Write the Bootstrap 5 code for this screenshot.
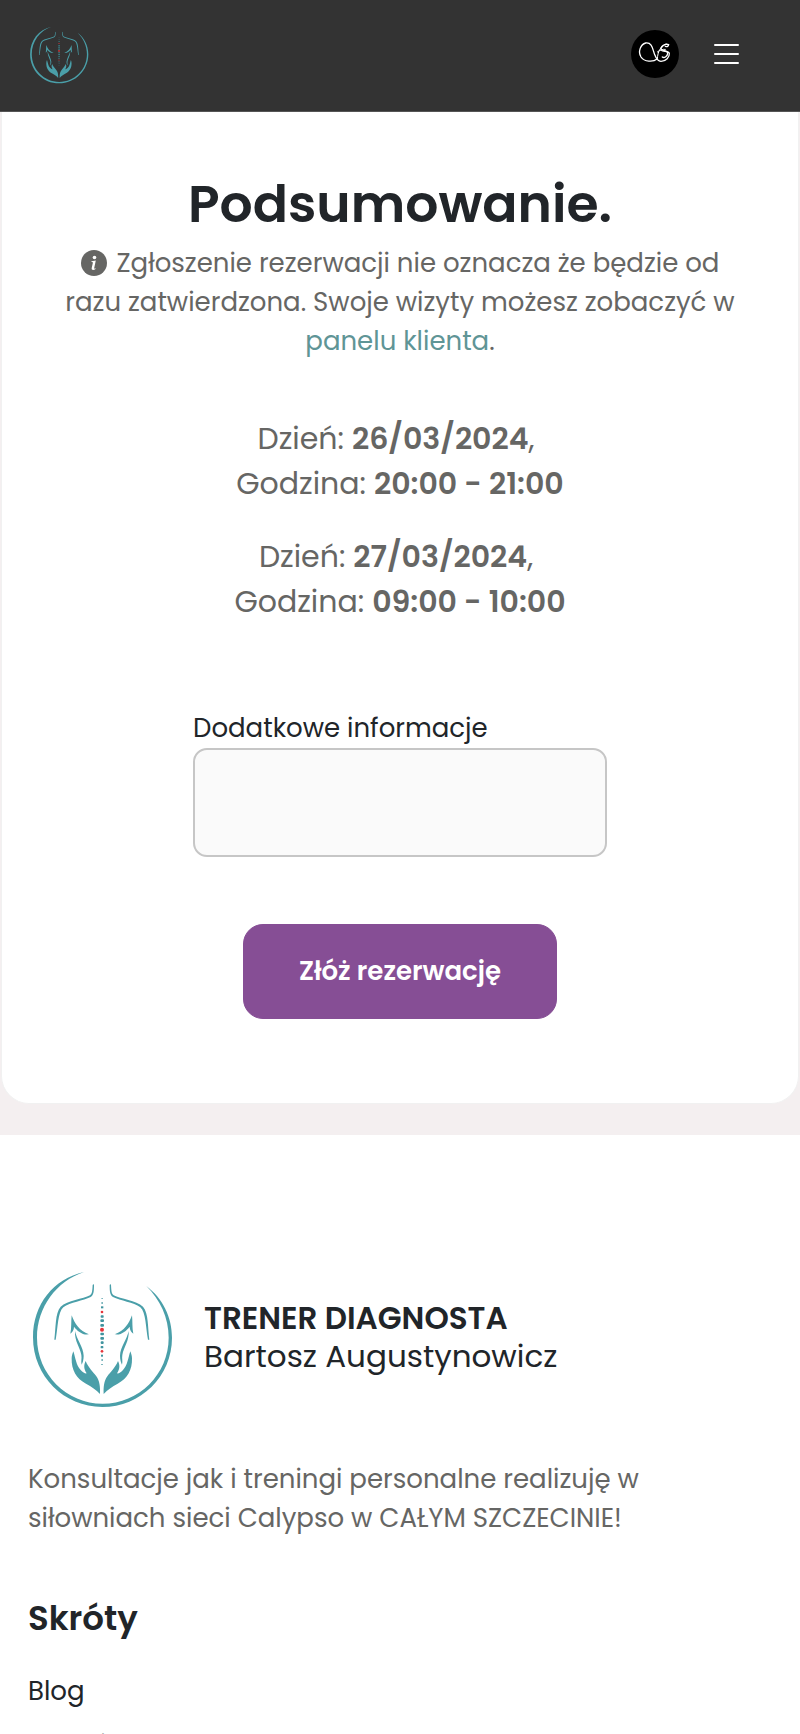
<!DOCTYPE html>
<html lang="pl">
<head>
<meta charset="utf-8">
<meta name="viewport" content="width=device-width, initial-scale=1">
<title>Podsumowanie rezerwacji</title>
<link rel="stylesheet" href="https://cdn.jsdelivr.net/npm/bootstrap@5.3.0/dist/css/bootstrap.min.css">
<style>
  :root { --ink: #212529; --soft-ink: #666664; }
  body { font-family: Poppins, Inter, sans-serif; font-size: 26px; line-height: 39px; color: var(--ink); background: #fff; }
  strong { font-weight: 600; }
  .soft-text { color: var(--soft-ink); }

  .topbar { background: #333; border-bottom: 1px solid #555; padding: 23px 61px 26px 28px; }
  .topbar-logo { width: 62px; height: 62px; }
  .topbar-actions { gap: 35px; }
  .avatar { width: 48px; height: 48px; }
  .menu-icon { width: 25px; height: 24px; }

  .stage { background: #f4eff0; padding: 0 1px 31px; }
  .sheet { background: #fff; border: 1px solid #f1f1f1; border-top: 0; border-radius: 0 0 28px 28px; padding: 60px 56px 84px; }
  .sheet h1 { font-size: 52px; line-height: 64px; font-weight: 600; }
  .info-icon { width: 26px; height: 26px; vertical-align: -4px; margin-right: 3px; }
  .panel-link { color: #5f9596; }
  .slots { font-size: 30px; line-height: 45px; margin-top: 55px; }
  .slots p + p { margin-top: 28px; }
  .notes { max-width: 414px; margin-top: 85px; }
  .notes textarea { height: 109px; resize: none; background: #fafafa; border: 2px solid #c6c6c6; border-radius: 14px; }
  .send-btn {
    --bs-btn-bg: #864e95; --bs-btn-color: #fff; --bs-btn-border-color: #864e95;
    --bs-btn-hover-bg: #733f82; --bs-btn-hover-color: #fff; --bs-btn-hover-border-color: #733f82;
    --bs-btn-font-size: 26px; --bs-btn-line-height: 39px; --bs-btn-font-weight: 600;
    --bs-btn-border-radius: 20px; --bs-btn-padding-y: 27px; --bs-btn-padding-x: 55px;
    margin-top: 67px;
  }

  .site-footer { padding: 128px 28px 0; }
  .footer-logo { width: 148px; height: 148px; }
  .footer-brand { gap: 28px; margin-bottom: 49px; }
  .footer-name { font-size: 31px; line-height: 38px; }
  .site-footer h2 { font-size: 34px; line-height: 41px; font-weight: 600; margin: 60px 0 33px; }
  .shortcuts { display: grid; gap: 15px; }
  .shortcuts a { color: var(--ink); }
</style>
</head>
<body>
<svg class="d-none" aria-hidden="true">
  <symbol id="back-logo" viewBox="24 24 444 444">
    <!-- ring, thickest at the lower left -->
    <path fill="#4a9fa9" d="M192 51C100 72 39 148 39 247C39 364 132 456 247 456C362 456 456 364 456 248C456 186 428 130 379 93C420 134 446 187 446 248C446 357 357 446 248 446C140 446 51 357 51 248C51 156 110 78 192 51Z"/>
    <g id="half-back" fill="#4a9fa9">
      <path d="M220 87L222 90C222 110 221 120 212 126C190 138 150 141 130 157C113 172 114 218 107 254L103 254C108 218 105 174 122 155C142 136 190 132 210 121C217 116 217 105 218 90Z"/>
      <path d="M155 181C164 205 178 228 207 238C187 241 172 228 162 215C162 224 157 232 151 236C155 219 153 199 155 181Z"/>
      <path d="M165 228C170 253 190 276 191 302C191 313 188 323 185 329C182 320 186 310 184 300C180 276 163 258 165 228Z"/>
      <path d="M160 289C167 310 168 330 182 345C189 352 196 357 200 355C191 341 191 330 197 318C205 338 219 350 229 364C239 378 241 396 240 417C228 404 215 395 198 386C169 371 154 345 155 310C155 302 158 295 160 289Z"/>
    </g>
    <use href="#half-back" transform="translate(491 0) scale(-1 1)"/>
    <g fill="#3f949f">
      <rect x="244" y="129" width="5" height="2"/><rect x="244" y="142" width="5" height="4"/>
      <rect x="243" y="154" width="7" height="6"/><rect x="242" y="181" width="9" height="7" rx="2"/>
      <rect x="241" y="193" width="11" height="8" rx="3"/><rect x="241" y="207" width="11" height="8" rx="3"/>
      <rect x="241" y="233" width="11" height="8" rx="3"/><rect x="241" y="246" width="11" height="8" rx="3"/>
      <rect x="242" y="259" width="9" height="8" rx="3"/><rect x="242" y="273" width="8" height="7" rx="2"/>
      <rect x="243" y="299" width="6" height="6"/><rect x="244" y="313" width="5" height="4"/><rect x="244" y="327" width="4" height="3"/>
    </g>
    <g fill="#e5353b">
      <circle cx="246" cy="171" r="4"/><circle cx="246" cy="224" r="6"/><circle cx="246" cy="289" r="4"/>
    </g>
  </symbol>
</svg>

<header class="topbar d-flex align-items-center justify-content-between">
  <a class="d-flex" href="#" aria-label="Trener Diagnosta"><svg class="topbar-logo"><use href="#back-logo"/></svg></a>
  <div class="topbar-actions d-flex align-items-center">
    <a class="d-flex" href="#" aria-label="Profil">
      <svg class="avatar" viewBox="17 18 144 144">
        <circle cx="89" cy="90" r="72"/>
        <g fill="none" stroke="#fff" stroke-linecap="round">
          <path stroke-width="4" d="M95 105C84 115 57 114 47 99C37 82 46 61 61 57C82 54 82 79 89 94C93 105 99 112 107 112C122 112 133 99 132 88C130 78 113 85 108 79C103 69 119 57 130 62C129 69 124 68 120 67"/>
          <path stroke-width="4" d="M110 78C118 81 128 79 127 89C126 98 116 103 111 99"/>
          <path stroke-width="3" d="M122 60C106 66 97 82 96 105M96 84C104 78 112 75 120 76"/>
        </g>
      </svg>
    </a>
    <button class="btn p-0 border-0 d-flex" type="button" aria-label="Menu">
      <svg class="menu-icon" viewBox="0 0 25 24" stroke="#fff" stroke-width="2" stroke-linecap="round"><path d="M1 3H24M1 12H24M1 21H24"/></svg>
    </button>
  </div>
</header>

<main class="stage">
  <section class="sheet text-center">
    <h1 class="mb-2">Podsumowanie.</h1>
    <p class="soft-text mb-0">
      <svg class="info-icon" viewBox="0 0 26 26" aria-hidden="true"><circle cx="13" cy="13" r="13" fill="#666664"/><circle cx="13.500" cy="7.500" r="1.800" fill="#fff"/><path fill="#fff" d="M10.500 11.200L14.800 10.600L13.200 18C13 19 13.700 18.900 14.700 18.300L14.500 19C13 20.300 10.200 20.500 10.700 18L11.900 12.700C12 12 11.500 12 10.400 11.900Z"/></svg>
      Zgłoszenie rezerwacji nie oznacza że będzie od razu zatwierdzona. Swoje wizyty możesz zobaczyć w
      <a class="panel-link text-decoration-none" href="#">panelu klienta</a>.
    </p>
    <div class="slots soft-text">
      <p class="mb-0">Dzień: <strong>26/03/2024</strong>,&nbsp;<br>Godzina: <strong>20:00 - 21:00</strong></p>
      <p class="mb-0">Dzień: <strong>27/03/2024</strong>,&nbsp;<br>Godzina: <strong>09:00 - 10:00</strong></p>
    </div>
    <form>
      <div class="notes mx-auto text-start">
        <label class="d-block" for="extra-info">Dodatkowe informacje</label>
        <textarea id="extra-info" class="form-control"></textarea>
      </div>
      <button class="btn send-btn" type="submit">Złóż rezerwację</button>
    </form>
  </section>
</main>

<footer class="site-footer">
  <div class="footer-brand d-flex align-items-center">
    <svg class="footer-logo flex-shrink-0" aria-hidden="true"><use href="#back-logo"/></svg>
    <div class="footer-name"><strong>TRENER DIAGNOSTA</strong><br>Bartosz Augustynowicz</div>
  </div>
  <p class="soft-text mb-0">Konsultacje jak i treningi personalne realizuję w siłowniach sieci Calypso w CAŁYM SZCZECINIE!</p>
  <h2>Skróty</h2>
  <ul class="shortcuts list-unstyled mb-0">
    <li><a class="text-decoration-none" href="#">Blog</a></li>
    <li><a class="text-decoration-none" href="#">Usługi</a></li>
  </ul>
</footer>
<script src="https://cdn.jsdelivr.net/npm/bootstrap@5.3.0/dist/js/bootstrap.bundle.min.js"></script>
</body>
</html>
